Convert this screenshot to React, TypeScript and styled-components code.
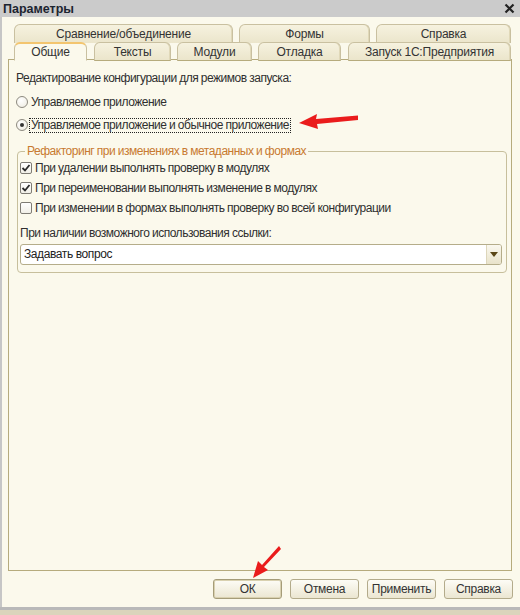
import React from "react";
import styled, { createGlobalStyle } from "styled-components";

const Global = createGlobalStyle`
  html, body { margin: 0; padding: 0; background: #fbf9ec; }
  * { box-sizing: border-box; }
  body { font-family: "Liberation Sans", Arial, sans-serif; font-size: 11px; color: #2f2f2f; }
`;

const Window = styled.div`
  position: relative;
  width: 520px;
  height: 615px;
  display: flex;
  flex-direction: column;
  overflow: hidden;
`;

const TitleBar = styled.div`
  height: 17px;
  background: #cbcbcb;
  display: flex;
  align-items: center;
  justify-content: space-between;
  padding: 0 5px 0 3px;
  font-size: 12.5px;
  font-weight: bold;
  color: #1c2430;
`;

const Body = styled.div`
  flex: 1;
  background: #fbf9ec;
  border-left: 2px solid #c6c6c6;
  padding: 7px 8px 7px 6px;
  display: flex;
  flex-direction: column;
`;

const TabRow = styled.div<{ $front?: boolean }>`
  display: flex;
  height: 18px;
  padding-left: 6px;
  position: relative;
  z-index: ${(p) => (p.$front ? 2 : 1)};
  margin-bottom: ${(p) => (p.$front ? "-1px" : "0")};
`;

const Tab = styled.div<{ $w: number; $gap: number; $active?: boolean; $back?: boolean }>`
  width: ${(p) => p.$w}px;
  margin-right: ${(p) => p.$gap}px;
  height: 19px;
  flex: none;
  display: flex;
  align-items: center;
  justify-content: center;
  border: 1px solid #c9c0a0;
  border-bottom: ${(p) => (p.$back ? "none" : p.$active ? "1px solid #fbf9ec" : "1px solid #b6ab7d")};
  border-top: ${(p) => (p.$active ? "2px solid #f3c56f" : "1px solid #c9c0a0")};
  border-radius: 6px 6px 0 0;
  background: ${(p) =>
    p.$active ? "#fbf9ec" : "linear-gradient(#f6f2df, #ebe5cb)"};
  box-shadow: ${(p) => (p.$active ? "none" : "inset -1px 0 0 #e0d8b8")};
  color: #333;
  font-size: 12px;
  letter-spacing: -0.2px;
  line-height: 14px;
  padding-bottom: ${(p) => (p.$back ? "1px" : "0")};
`;

const Panel = styled.div`
  height: 512px;
  border: 1px solid #b6ab7d;
  background: #fbf9ec;
  padding: 10px 6px 0 7px;
  display: flex;
  flex-direction: column;
  position: relative;
  z-index: 1;
`;

const Line = styled.div<{ $mt?: number }>`
  height: 16px;
  line-height: 16px;
  margin-top: ${(p) => p.$mt ?? 0}px;
  display: flex;
  align-items: center;
  white-space: nowrap;
  font-size: 12px;
  letter-spacing: -0.48px;
  word-spacing: -0.3px;
`;

const RadioCircle = styled.span<{ $checked?: boolean }>`
  width: 12px;
  height: 12px;
  flex: none;
  border-radius: 50%;
  border: 1px solid #8d8a80;
  background: radial-gradient(circle at 40% 35%, #ffffff 0%, #f2f0e8 70%, #e2dfd4 100%);
  display: flex;
  align-items: center;
  justify-content: center;
  margin-right: 2px;
  &::after {
    content: "";
    width: 4px;
    height: 4px;
    border-radius: 50%;
    background: #333;
    display: ${(p) => (p.$checked ? "block" : "none")};
  }
`;

const RadioText = styled.span<{ $focus?: boolean }>`
  padding: 0 1px;
  line-height: 13px;
  outline: ${(p) => (p.$focus ? "1px dotted #222" : "none")};
`;

const Group = styled.fieldset`
  margin: 10px 0 0 1px;
  width: 490px;
  border: 1px solid #c7bf9c;
  border-radius: 4px;
  padding: 0 4px 7px 2px;
  display: flex;
  flex-direction: column;
`;

const Legend = styled.legend`
  margin-left: 5px;
  padding: 0 2px;
  height: 16px;
  line-height: 16px;
  color: #c87a30;
  font-size: 12px;
  letter-spacing: -0.48px;
  word-spacing: -0.3px;
`;

const CheckBox = styled.span`
  width: 12px;
  height: 12px;
  flex: none;
  border: 1px solid #7e7b74;
  border-radius: 2px;
  background: linear-gradient(#ffffff, #f1efe7);
  margin-right: 3px;
  display: flex;
  align-items: center;
  justify-content: center;
`;

const Select = styled.div`
  margin-top: 3px;
  height: 21px;
  border: 1px solid #b5ad8a;
  border-radius: 3px;
  background: #fff;
  display: flex;
  align-items: stretch;
`;

const SelectValue = styled.div`
  flex: 1;
  padding-left: 3px;
  line-height: 19px;
  color: #222;
  font-size: 12px;
  letter-spacing: -0.4px;
`;

const SelectButton = styled.div`
  width: 15px;
  border-left: 1px solid #ddd6bb;
  background: linear-gradient(#faf8ef, #e9e3ca);
  border-radius: 0 2px 2px 0;
  display: flex;
  align-items: center;
  justify-content: center;
`;

const Footer = styled.div`
  margin-top: 8px;
  display: flex;
  justify-content: flex-end;
  gap: 8px;
  margin-right: -1px;
`;

const Button = styled.div<{ $default?: boolean }>`
  width: 69px;
  height: 20px;
  border: 1px solid ${(p) => (p.$default ? "#a59c78" : "#b3ab8b")};
  border-radius: 3px;
  background: linear-gradient(#fdfcf6, #ebe6d1);
  box-shadow: ${(p) => (p.$default ? "inset 0 0 0 1px #d9d1b0" : "none")};
  display: flex;
  align-items: center;
  justify-content: center;
  color: #333;
  font-size: 12px;
  letter-spacing: -0.3px;
`;

const BottomEdge = styled.div`
  height: 3px;
  background: #b9b9b9;
`;

const Desk = styled.div`
  height: 5px;
  background: #dbd4bc;
`;

const Overlay = styled.svg`
  position: absolute;
  left: 0;
  top: 0;
  pointer-events: none;
  z-index: 10;
`;

const Check = () => (
  <svg width="10" height="10" viewBox="0 0 10 10">
    <path d="M1.5 5 L4 7.5 L8.5 2" fill="none" stroke="#2a2a2a" strokeWidth="1.8" />
  </svg>
);

export default function App() {
  return (
    <Window>
      <Global />
      <TitleBar>
        <span>Параметры</span>
        <svg width="11" height="11" viewBox="0 0 11 11">
          <path d="M1.5 1.5 L9.5 9.5 M9.5 1.5 L1.5 9.5" stroke="#222" strokeWidth="2.2" />
        </svg>
      </TitleBar>
      <Body>
        <TabRow>
          <Tab $back $w={219} $gap={6}>Сравнение/объединение</Tab>
          <Tab $back $w={131} $gap={6}>Формы</Tab>
          <Tab $back $w={135} $gap={0}>Справка</Tab>
        </TabRow>
        <TabRow $front>
          <Tab $active $w={73} $gap={7}>Общие</Tab>
          <Tab $w={77} $gap={6}>Тексты</Tab>
          <Tab $w={75} $gap={6}>Модули</Tab>
          <Tab $w={83} $gap={7}>Отладка</Tab>
          <Tab $w={163} $gap={0}>Запуск 1С:Предприятия</Tab>
        </TabRow>
        <Panel>
          <Line>Редактирование конфигурации для режимов запуска:</Line>
          <Line $mt={8}>
            <RadioCircle />
            <RadioText>Управляемое приложение</RadioText>
          </Line>
          <Line $mt={7}>
            <RadioCircle $checked />
            <RadioText $focus>Управляемое приложение и обычное приложение</RadioText>
          </Line>
          <Group>
            <Legend>Рефакторинг при изменениях в метаданных и формах</Legend>
            <Line $mt={1}>
              <CheckBox><Check /></CheckBox>
              При удалении выполнять проверку в модулях
            </Line>
            <Line $mt={4}>
              <CheckBox><Check /></CheckBox>
              При переименовании выполнять изменение в модулях
            </Line>
            <Line $mt={4}>
              <CheckBox />
              При изменении в формах выполнять проверку во всей конфигурации
            </Line>
            <Line $mt={9}>При наличии возможного использования ссылки:</Line>
            <Select>
              <SelectValue>Задавать вопрос</SelectValue>
              <SelectButton>
                <svg width="8" height="5" viewBox="0 0 8 5">
                  <path d="M0 0 H8 L4 5 Z" fill="#5a4616" />
                </svg>
              </SelectButton>
            </Select>
          </Group>
        </Panel>
        <Footer>
          <Button $default>ОК</Button>
          <Button>Отмена</Button>
          <Button>Применить</Button>
          <Button>Справка</Button>
        </Footer>
      </Body>
      <BottomEdge />
      <Desk />
      <Overlay width="520" height="615" viewBox="0 0 520 615">
        <path d="M358 115.5 L316 119 L317 114 L299 123 L318 129 L317 124 L358 120 Z" fill="#ea1c1c" />
        <path d="M279 546 L262 565 L258 561 L253 578 L268 570 L264 567 L281 549 Z" fill="#ea1c1c" />
      </Overlay>
    </Window>
  );
}
